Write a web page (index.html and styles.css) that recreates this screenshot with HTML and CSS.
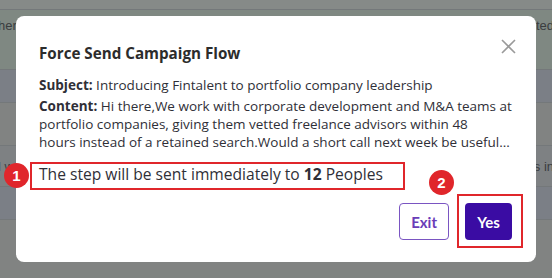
FILE: index.html
```html
<!DOCTYPE html>
<html lang="en">
<head>
    <meta charset="UTF-8">
    <meta name="viewport" content="width=device-width, initial-scale=1.0">
    <title>Force Send Campaign Flow</title>
    <link rel="stylesheet" href="styles.css">
</head>
<body>

    <!-- Page behind the dialog -->
    <div class="page">
        <div class="row row-top"></div>
        <div class="row row-head"><span class="cell-left">her</span><span class="cell-right">ted</span></div>
        <div class="row row-a"></div>
        <div class="row row-b"></div>
        <div class="row row-c"><span class="cell-left">l w</span><span class="cell-right">ls in</span></div>
        <div class="row row-a"></div>
        <div class="row row-d"></div>
    </div>

    <div class="overlay">
        <div class="modal">
            <div class="modal-header">
                <h3>Force Send Campaign Flow</h3>
                <button class="close" aria-label="Close">
                    <svg width="15" height="15" viewBox="0 0 15 15">
                        <path d="M1 1L14 14M14 1L1 14" stroke="#9a9a9a" stroke-width="1.6" fill="none"/>
                    </svg>
                </button>
            </div>

            <div class="modal-body">
                <p class="subject"><b>Subject:</b> Introducing Fintalent to portfolio company leadership</p>
                <p class="content"><b>Content:</b> Hi there,We work with corporate development and M&amp;A teams at portfolio companies, giving them vetted freelance advisors within 48<br>hours instead of a retained search.Would a short call next week be useful...</p>
                <p class="notice">The step will be sent immediately to <b>12</b> Peoples</p>
            </div>

            <div class="modal-footer">
                <button class="btn btn-exit">Exit</button>
                <button class="btn btn-yes">Yes</button>
            </div>

            <!-- Annotations -->
            <div class="mark mark-notice"></div>
            <div class="mark mark-yes"></div>
            <span class="badge badge-1">1</span>
            <span class="badge badge-2">2</span>
        </div>
    </div>

</body>
</html>
```

FILE: styles.css
```css
body {
    margin: 0;
    padding: 0;
    font-family: 'Open Sans', sans-serif;
    width: 552px;
    height: 278px;
    overflow: hidden;
    position: relative;
    background-color: #7f8481;
}

/* Background page rows */
.page {
    display: flex;
    flex-direction: column;
    height: 278px;
    overflow: hidden;
}

.row {
    display: flex;
    justify-content: space-between;
    align-items: center;
    flex-shrink: 0;
    border-bottom: 1px solid #74787a;
    font-family: 'Liberation Sans', sans-serif;
    font-size: 13px;
    color: #3a3d3f;
}

.row-top {
    height: 9px;
    background-color: #868a88;
}

.row-head {
    height: 60px;
    align-items: flex-start;
    padding-top: 8px;
    box-sizing: border-box;
    background-color: #7f8882;
}

.row-a {
    height: 32px;
    background-color: #7b7f86;
}

.row-b {
    height: 42px;
    background-color: #818382;
}

.row-c {
    height: 40px;
    background-color: #7e8183;
}

.row-d {
    height: 50px;
    border-bottom: none;
    background-color: #818382;
}

.cell-left {
    margin-left: -2px;
}

.cell-right {
    margin-right: -2px;
}

/* Dialog */
.overlay {
    position: absolute;
    inset: 0;
    display: flex;
    justify-content: center;
    align-items: center;
}

.modal {
    position: relative;
    width: 520px;
    height: 246px;
    background-color: #fff;
    border-radius: 8px;
    box-sizing: border-box;
    padding: 23px 22px 22px 23px;
    display: flex;
    flex-direction: column;
    color: #2f2f37;
}

.modal-header {
    display: flex;
    justify-content: space-between;
    align-items: flex-start;
}

.modal-header h3 {
    margin: 4px 0 0;
    font-size: 15.2px;
    line-height: 20px;
    font-weight: 700;
    color: #2c2c2c;
}

.close {
    background: none;
    border: none;
    padding: 0;
    margin: 0 -2px 0 0;
    cursor: pointer;
}

.modal-body {
    margin-top: 13px;
    font-size: 13.5px;
    line-height: 18px;
}

.modal-body p {
    margin: 0;
}

.subject {
    margin-bottom: 3px !important;
}

.notice {
    margin-top: 14px !important;
    font-size: 15.6px;
}

.modal-footer {
    margin-top: auto;
    display: flex;
    justify-content: flex-end;
    gap: 16px;
    padding-right: 2px;
}

.btn {
    height: 37px;
    padding: 0 11px;
    font-family: 'Lato', sans-serif;
    font-size: 15px;
    font-weight: 700;
    border-radius: 4px;
    cursor: pointer;
}

.btn-exit {
    background-color: #fff;
    color: #6a3db8;
    border: 1px solid #7a55c2;
}

.btn-yes {
    width: 47px;
    background-color: #3a0ca3;
    color: #fff;
    border: none;
}

/* Annotation boxes and badges */
.mark {
    position: absolute;
    border: 2px solid #e0262b;
    box-sizing: border-box;
}

.mark-notice {
    left: 14px;
    top: 146px;
    width: 375px;
    height: 28px;
}

.mark-yes {
    left: 441px;
    top: 178px;
    width: 66px;
    height: 54px;
}

.badge {
    position: absolute;
    width: 25px;
    height: 25px;
    border-radius: 50%;
    background-color: #e0262b;
    color: #fff;
    font-family: 'Liberation Sans', sans-serif;
    font-size: 15px;
    font-weight: 700;
    display: flex;
    justify-content: center;
    align-items: center;
}

.badge-1 {
    left: -12px;
    top: 147px;
}

.badge-2 {
    left: 413px;
    top: 154px;
}
```
